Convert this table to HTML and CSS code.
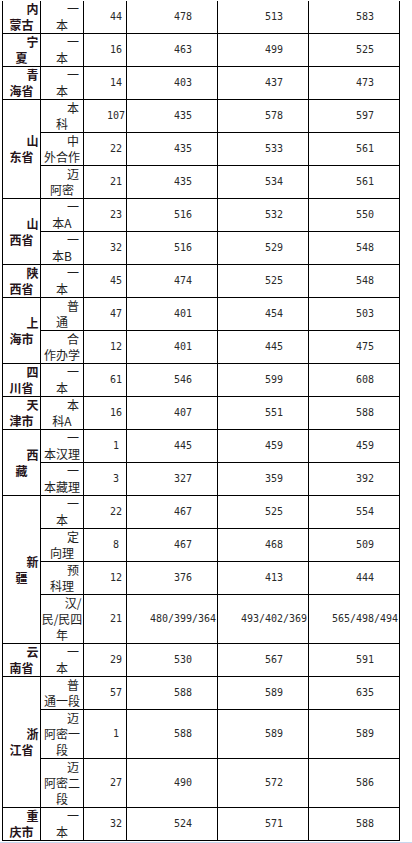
FILE: index.html
```html
<!DOCTYPE html>
<html lang="zh-CN">
<head>
<meta charset="utf-8">
<title>录取分数</title>
<link rel="stylesheet" href="styles.css">
</head>
<body>
<table class="t">
<colgroup><col class="c1"><col class="c2"><col class="c3"><col class="cw"><col class="cw"><col class="cw"></colgroup>
<tbody>
<tr><td class="p">内<br>蒙古</td><td class="k">一<br>本</td><td class="n">44</td><td class="n">478</td><td class="n">513</td><td class="n">583</td></tr>
<tr><td class="p">宁<br>夏</td><td class="k">一<br>本</td><td class="n">16</td><td class="n">463</td><td class="n">499</td><td class="n">525</td></tr>
<tr><td class="p">青<br>海省</td><td class="k">一<br>本</td><td class="n">14</td><td class="n">403</td><td class="n">437</td><td class="n">473</td></tr>
<tr><td class="p" rowspan="3">山<br>东省</td><td class="k">本<br>科</td><td class="n">107</td><td class="n">435</td><td class="n">578</td><td class="n">597</td></tr>
<tr><td class="k">中<br>外合作</td><td class="n">22</td><td class="n">435</td><td class="n">533</td><td class="n">561</td></tr>
<tr><td class="k">迈<br>阿密</td><td class="n">21</td><td class="n">435</td><td class="n">534</td><td class="n">561</td></tr>
<tr><td class="p" rowspan="2">山<br>西省</td><td class="k">一<br>本A</td><td class="n">23</td><td class="n">516</td><td class="n">532</td><td class="n">550</td></tr>
<tr><td class="k">一<br>本B</td><td class="n">32</td><td class="n">516</td><td class="n">529</td><td class="n">548</td></tr>
<tr><td class="p">陕<br>西省</td><td class="k">一<br>本</td><td class="n">45</td><td class="n">474</td><td class="n">525</td><td class="n">548</td></tr>
<tr><td class="p" rowspan="2">上<br>海市</td><td class="k">普<br>通</td><td class="n">47</td><td class="n">401</td><td class="n">454</td><td class="n">503</td></tr>
<tr><td class="k">合<br>作办学</td><td class="n">12</td><td class="n">401</td><td class="n">445</td><td class="n">475</td></tr>
<tr><td class="p">四<br>川省</td><td class="k">一<br>本</td><td class="n">61</td><td class="n">546</td><td class="n">599</td><td class="n">608</td></tr>
<tr><td class="p">天<br>津市</td><td class="k">本<br>科A</td><td class="n">16</td><td class="n">407</td><td class="n">551</td><td class="n">588</td></tr>
<tr><td class="p" rowspan="2">西<br>藏</td><td class="k">一<br>本汉理</td><td class="n">1</td><td class="n">445</td><td class="n">459</td><td class="n">459</td></tr>
<tr><td class="k">一<br>本藏理</td><td class="n">3</td><td class="n">327</td><td class="n">359</td><td class="n">392</td></tr>
<tr><td class="p" rowspan="4">新<br>疆</td><td class="k">一<br>本</td><td class="n">22</td><td class="n">467</td><td class="n">525</td><td class="n">554</td></tr>
<tr><td class="k">定<br>向理</td><td class="n">8</td><td class="n">467</td><td class="n">468</td><td class="n">509</td></tr>
<tr><td class="k">预<br>科理</td><td class="n">12</td><td class="n">376</td><td class="n">413</td><td class="n">444</td></tr>
<tr><td class="k">汉/<br>民/民四<br>年</td><td class="n">21</td><td class="n">480/399/364</td><td class="n">493/402/369</td><td class="n">565/498/494</td></tr>
<tr><td class="p">云<br>南省</td><td class="k">一<br>本</td><td class="n">29</td><td class="n">530</td><td class="n">567</td><td class="n">591</td></tr>
<tr><td class="p" rowspan="3">浙<br>江省</td><td class="k">普<br>通一段</td><td class="n">57</td><td class="n">588</td><td class="n">589</td><td class="n">635</td></tr>
<tr><td class="k">迈<br>阿密一<br>段</td><td class="n">1</td><td class="n">588</td><td class="n">589</td><td class="n">589</td></tr>
<tr><td class="k">迈<br>阿密二<br>段</td><td class="n">27</td><td class="n">490</td><td class="n">572</td><td class="n">586</td></tr>
<tr><td class="p">重<br>庆市</td><td class="k">一<br>本</td><td class="n">32</td><td class="n">524</td><td class="n">571</td><td class="n">588</td></tr>
</tbody>
</table>
<div class="frame"></div>
</body>
</html>
```
FILE: styles.css
```css
html, body {
  margin: 0;
  padding: 0;
  background: #ffffff;
}
body {
  padding-top: 1px;
}
.t {
  border-collapse: separate;
  border-spacing: 0;
  table-layout: fixed;
  width: 398px;
  margin-left: 2px;
  border-left: 1px solid #000;
}
.c1 { width: 38px; }
.c2 { width: 43px; }
.c3 { width: 43px; }
.cw { width: 91px; }
.t td {
  height: 32px;
  box-sizing: border-box;
  border-right: 1px solid #000;
  border-bottom: 1px solid #000;
  padding: 0;
  text-align: center;
  text-indent: 22px;
  vertical-align: middle;
  line-height: 16px;
  white-space: nowrap;
  overflow: visible;
  font-family: "Noto Sans CJK SC", sans-serif;
  font-size: 12px;
  color: #1e1e1e;
}
.t td.p {
  font-weight: bold;
  color: #26141a;
}
.t td.n {
  font-family: "DejaVu Sans Mono", "Liberation Mono", monospace;
  font-size: 10px;
  color: #2a2a2a;
}
.frame {
  margin-top: 1px;
  border-top: 2px solid #c8d7ee;
}
```
